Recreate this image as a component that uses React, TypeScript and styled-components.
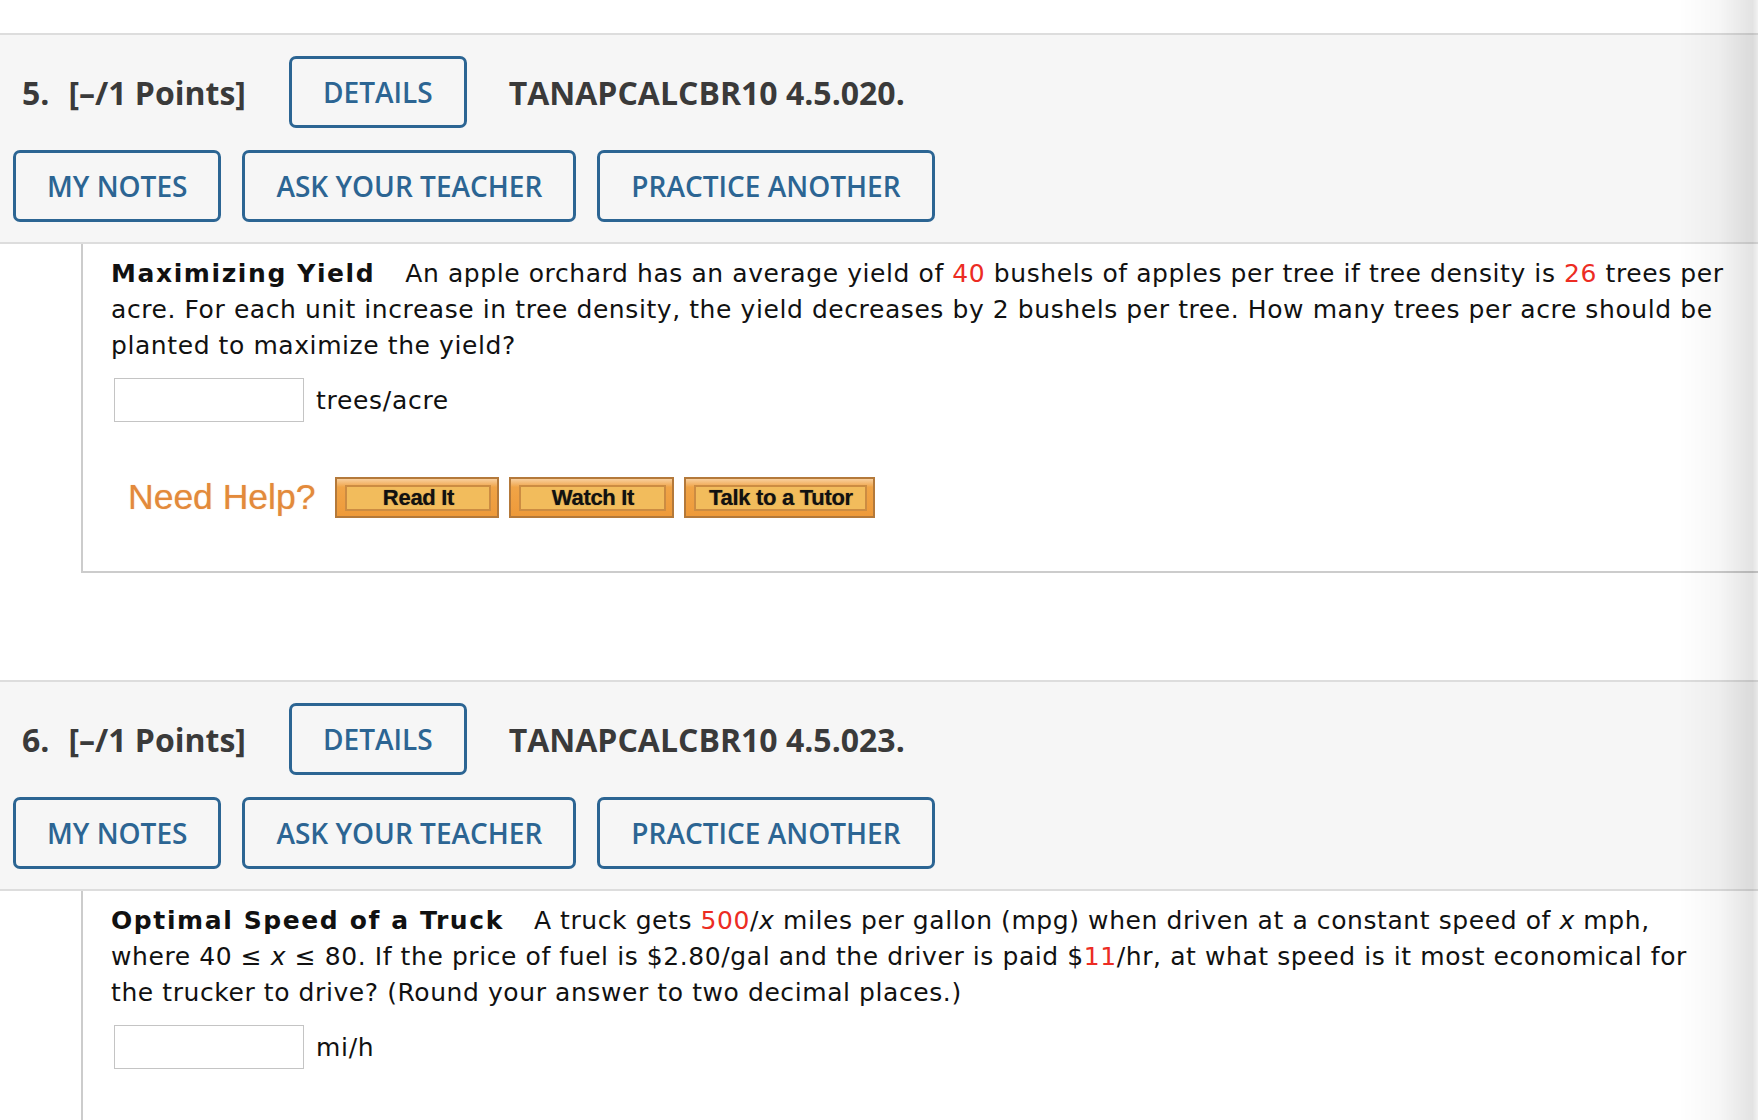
import React from "react";
import styled, { createGlobalStyle } from "styled-components";

const GlobalStyle = createGlobalStyle`
  html, body { margin: 0; padding: 0; background: #ffffff; }
  body { font-family: "DejaVu Sans", Verdana, sans-serif; }
`;

const Page = styled.div`
  padding-top: 33px;
  min-height: 1120px;
  box-sizing: border-box;
  overflow: hidden;
`;

const EdgeShade = styled.div`
  position: fixed;
  top: 0;
  right: 0;
  bottom: 0;
  width: 80px;
  pointer-events: none;
  background: linear-gradient(
    to right,
    rgba(0, 0, 0, 0) 0%,
    rgba(0, 0, 0, 0.03) 50%,
    rgba(0, 0, 0, 0.11) 93%,
    rgba(0, 0, 0, 0.05) 100%
  );
`;

const Question = styled.section<{ $first?: boolean }>`
  margin-top: ${(p) => (p.$first ? "0" : "107px")};
`;

const Header = styled.div`
  background: #f6f6f6;
  border-top: 2px solid #dddddd;
  border-bottom: 2px solid #dddddd;
  padding: 21px 0 20px 13px;
  display: flex;
  flex-direction: column;
  gap: 22px;
  font-family: "Open Sans", "Liberation Sans", sans-serif;
`;

const HeaderRow = styled.div`
  display: flex;
  align-items: center;
`;

const Points = styled.div`
  margin-left: 9px;
  width: 267px;
  font-size: 32px;
  font-weight: 700;
  color: #3a3a3a;
  display: flex;
  gap: 19px;
  white-space: nowrap;
`;

const Code = styled.div`
  margin-left: 42px;
  font-size: 32px;
  font-weight: 700;
  color: #3a3a3a;
  white-space: nowrap;
`;

const ButtonRow = styled.div`
  display: flex;
  gap: 21px;
`;

const OutlineButton = styled.button`
  height: 72px;
  box-sizing: border-box;
  padding: 0 31px;
  border: 3px solid #2c6593;
  border-radius: 7px;
  background: transparent;
  color: #2c6593;
  font-family: "Open Sans", "Liberation Sans", sans-serif;
  font-size: 28px;
  font-weight: 600;
  white-space: nowrap;
  cursor: pointer;
`;

const Body = styled.div<{ $closed?: boolean }>`
  margin-left: 81px;
  border-left: 2px solid #cccccc;
  border-bottom: ${(p) => (p.$closed ? "2px solid #cccccc" : "none")};
  padding: 12px 24px ${(p) => (p.$closed ? "53px" : "60px")} 28px;
  color: #111111;
`;

const Prompt = styled.p`
  margin: 0;
  font-size: 25px;
  line-height: 36px;
  letter-spacing: 0.58px;
`;

const Title = styled.b`
  font-weight: 700;
  letter-spacing: 1.6px;
  margin-right: 30px;
`;

const Red = styled.span`
  color: #ec2c23;
`;

const Var = styled.i`
  font-style: italic;
`;

const AnswerRow = styled.div`
  margin-top: 14px;
  display: flex;
  align-items: center;
  gap: 12px;
  font-size: 25px;
  letter-spacing: 0.7px;
`;

const AnswerBox = styled.input`
  margin-left: 3px;
  width: 190px;
  height: 44px;
  box-sizing: border-box;
  border: 1px solid #c4c4c4;
  background: #ffffff;
  outline: none;
`;

const HelpRow = styled.div`
  margin-top: 55px;
  margin-left: 17px;
  display: flex;
  align-items: center;
  gap: 10px;
`;

const HelpLabel = styled.span`
  font-family: "Liberation Sans", Arial, sans-serif;
  font-size: 35.5px;
  color: #e38a3b;
  margin-right: 10px;
  text-shadow: 0 0 1px rgba(227, 138, 59, 0.6);
`;

const HelpButton = styled.button<{ $w: number }>`
  width: ${(p) => p.$w}px;
  height: 41px;
  box-sizing: border-box;
  padding: 6px 6px 5px 8px;
  border: 2px solid #b4793a;
  background: linear-gradient(to bottom, #f8cf9e 0%, #f0a447 22%, #ee9a3a 100%);
  cursor: pointer;
  display: flex;
`;

const HelpFace = styled.span`
  flex: 1;
  display: flex;
  align-items: center;
  justify-content: center;
  border: 2px solid #cc8c42;
  background: #f2bc5c;
  font-family: "Liberation Sans", Arial, sans-serif;
  font-weight: 700;
  font-size: 22px;
  letter-spacing: -0.3px;
  color: #111111;
  text-shadow: 0 0 1px rgba(0, 0, 0, 0.5);
`;

type QProps = {
  num: number;
  code: string;
  first?: boolean;
  closed?: boolean;
  children: React.ReactNode;
};

function QuestionBlock({ num, code, first, closed, children }: QProps) {
  return (
    <Question $first={first}>
      <Header>
        <HeaderRow>
          <Points>
            <span>{num}.</span>
            <span>[–/1 Points]</span>
          </Points>
          <OutlineButton>DETAILS</OutlineButton>
          <Code>{code}</Code>
        </HeaderRow>
        <ButtonRow>
          <OutlineButton>MY NOTES</OutlineButton>
          <OutlineButton>ASK YOUR TEACHER</OutlineButton>
          <OutlineButton>PRACTICE ANOTHER</OutlineButton>
        </ButtonRow>
      </Header>
      <Body $closed={closed}>{children}</Body>
    </Question>
  );
}

export default function App() {
  return (
    <>
      <GlobalStyle />
      <Page>
        <QuestionBlock num={5} code="TANAPCALCBR10 4.5.020." first closed>
          <Prompt>
            <Title>Maximizing Yield</Title>An apple orchard has an average yield of{" "}
            <Red>40</Red> bushels of apples per tree if tree density is <Red>26</Red> trees
            per acre. For each unit increase in tree density, the yield decreases by 2 bushels
            per tree. How many trees per acre should be planted to maximize the yield?
          </Prompt>
          <AnswerRow>
            <AnswerBox type="text" aria-label="trees per acre" />
            <span>trees/acre</span>
          </AnswerRow>
          <HelpRow>
            <HelpLabel>Need Help?</HelpLabel>
            <HelpButton $w={164}>
              <HelpFace>Read It</HelpFace>
            </HelpButton>
            <HelpButton $w={165}>
              <HelpFace>Watch It</HelpFace>
            </HelpButton>
            <HelpButton $w={191}>
              <HelpFace>Talk to a Tutor</HelpFace>
            </HelpButton>
          </HelpRow>
        </QuestionBlock>
        <QuestionBlock num={6} code="TANAPCALCBR10 4.5.023.">
          <Prompt>
            <Title>Optimal Speed of a Truck</Title>A truck gets <Red>500</Red>/<Var>x</Var>{" "}
            miles per gallon (mpg) when driven at a constant speed of <Var>x</Var> mph, where
            40 ≤ <Var>x</Var> ≤ 80. If the price of fuel is $2.80/gal and the driver is paid
            $<Red>11</Red>/hr, at what speed is it most economical for the trucker to drive?
            (Round your answer to two decimal places.)
          </Prompt>
          <AnswerRow>
            <AnswerBox type="text" aria-label="miles per hour" />
            <span>mi/h</span>
          </AnswerRow>
        </QuestionBlock>
      </Page>
      <EdgeShade />
    </>
  );
}
